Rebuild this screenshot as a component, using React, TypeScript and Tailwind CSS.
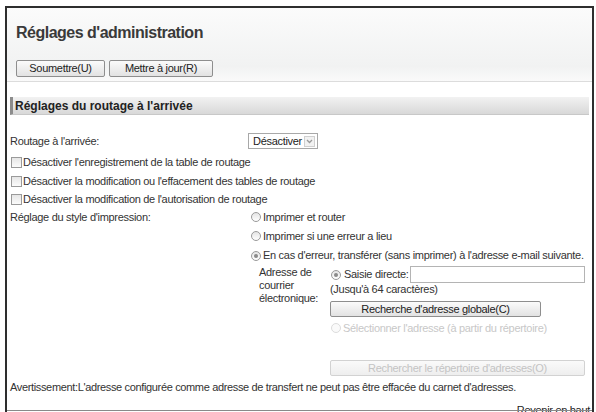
import React from "react";

const font = { fontFamily: '"Liberation Sans", Arial, sans-serif' };

function Radio({ checked = false, disabled = false }: { checked?: boolean; disabled?: boolean }) {
  return (
    <span
      className={
        "inline-flex items-center justify-center w-[10px] h-[10px] rounded-full border shrink-0 " +
        (disabled
          ? "border-[#dcdcdc] bg-[#fafafa]"
          : "border-[#9a9a9a] bg-gradient-to-b from-[#e4e4e4] to-[#ffffff]")
      }
    >
      {checked && <span className="w-[4px] h-[4px] rounded-full bg-[#8a8a8a]" />}
    </span>
  );
}

function Checkbox() {
  return (
    <span className="inline-block w-[11px] h-[11px] border border-[#9a9a9a] bg-gradient-to-b from-[#e6e6e6] to-[#fbfbfb] shrink-0" />
  );
}

function Btn({ children, className = "", disabled = false }: { children: React.ReactNode; className?: string; disabled?: boolean }) {
  return (
    <div
      className={
        "flex items-center justify-center rounded-[2px] border text-[11px] leading-none tracking-[-0.3px] " +
        (disabled
          ? "border-[#d2d2d2] bg-gradient-to-b from-[#fafafa] to-[#eeeeee] text-[#c4c4c4] "
          : "border-[#8e8e8e] bg-gradient-to-b from-[#fbfbfb] to-[#e2e2e2] text-[#222] ") +
        className
      }
    >
      {children}
    </div>
  );
}

export default function App() {
  return (
    <div className="w-[596px] h-[412px] bg-white overflow-hidden text-[#333]" style={font}>
      <div className="ml-[5px] mt-[6px] w-[589px] h-[406px] border-2 border-b-0 border-[#2e2e2e] relative">
        {/* page header */}
        <div className="h-[74px] border-b border-[#dcdcdc] bg-gradient-to-b from-[#fbfbfb] via-[#f1f2f2] via-80% to-[#fafafa] px-[7px]">
          <div className="pt-[15px] h-[44px] text-[16px] font-bold tracking-[-0.5px] text-[#3a3a3a] leading-[20px] pl-[2px]">
            Réglages d'administration
          </div>
          <div className="flex gap-[4px] pl-[2px] pt-[8px]">
            <Btn className="w-[89px] h-[17px]">Soumettre(U)</Btn>
            <Btn className="w-[104px] h-[17px]">Mettre à jour(R)</Btn>
          </div>
        </div>

        {/* section title */}
        <div className="mt-[15px] ml-[3px] mr-[3px] h-[18px] flex items-center border-l-[3px] border-[#8c8c8c] border-b border-b-[#c8c8c8] bg-gradient-to-b from-[#f2f2f2] to-[#d8d8d8] pl-[2px]">
          <span className="text-[12px] font-bold text-[#222]">Réglages du routage à l'arrivée</span>
        </div>

        <div className="pl-[3px] text-[11px] leading-[13px] tracking-[-0.3px] text-[#333]">
          {/* inbound routing */}
          <div className="mt-[17px] h-[18px] flex items-center">
            <div className="w-[238px]">Routage à l'arrivée:</div>
            <div className="w-[70px] h-[16px] border border-[#a8a8a8] bg-white flex items-center justify-between pl-[4px] pr-[2px]">
              <span className="text-[#222]">Désactiver</span>
              <span className="w-[11px] h-[11px] border border-[#d0d0d0] bg-[#f2f2f2] flex items-center justify-center">
                <svg width="7" height="5" viewBox="0 0 7 5">
                  <path d="M1 1 L3.5 3.5 L6 1" fill="none" stroke="#9a9a9a" strokeWidth="1.3" />
                </svg>
              </span>
            </div>
          </div>

          {[
            "Désactiver l'enregistrement de la table de routage",
            "Désactiver la modification ou l'effacement des tables de routage",
            "Désactiver la modification de l'autorisation de routage",
          ].map((t, i) => (
            <div key={i} className={"flex items-center gap-[1px] pl-[1px] " + (i === 2 ? "h-[17px]" : "h-[19px]") + (i === 0 ? " mt-[3px]" : "")}>
              <Checkbox />
              <span>{t}</span>
            </div>
          ))}

          {/* print style */}
          <div className="flex">
            <div className="w-[241px] h-[18px] flex items-center">Réglage du style d'impression:</div>
            <div className="flex-1">
              <div className="h-[18px] flex items-center gap-[2px]">
                <Radio />
                <span>Imprimer et router</span>
              </div>
              <div className="h-[20px] flex items-center gap-[2px]">
                <Radio />
                <span>Imprimer si une erreur a lieu</span>
              </div>
              <div className="h-[19px] flex items-center gap-[2px] whitespace-nowrap">
                <Radio checked />
                <span>En cas d'erreur, transférer (sans imprimer) à l'adresse e-mail suivante.</span>
              </div>

              <div className="flex pt-[1px]">
                <div className="w-[79px] pl-[8px] leading-[13px]">
                  Adresse de
                  <br />
                  courrier
                  <br />
                  électronique:
                </div>
                <div className="w-[255px]">
                  <div className="h-[17px] flex items-center">
                    <span className="pl-[1px] flex items-center gap-[3px]">
                      <Radio checked />
                      <span>Saisie directe:</span>
                    </span>
                    <span className="ml-[1px] flex-1 h-[17px] border border-[#b4b4b4] bg-white" />
                  </div>
                  <div className="h-[13px] leading-[13px]">(Jusqu'à 64 caractères)</div>
                  <Btn className="mt-[5px] w-[211px] h-[16px]">Recherche d'adresse globale(C)</Btn>
                  <div className="mt-[2px] h-[18px] flex items-center gap-[2px] pl-[1px] text-[#c8c8c8]">
                    <Radio disabled />
                    <span>Sélectionner l'adresse (à partir du répertoire)</span>
                  </div>
                  <Btn disabled className="mt-[23px] w-[255px] h-[16px]">Rechercher le répertoire d'adresses(O)</Btn>
                </div>
              </div>
            </div>
          </div>

          <div className="mt-[4px] h-[14px] flex items-center tracking-[-0.35px]">
            Avertissement:L'adresse configurée comme adresse de transfert ne peut pas être effacée du carnet d'adresses.
          </div>
          <div className="mt-[10px] h-[13px] text-right pr-[2px] text-[#222]">Revenir en haut</div>
        </div>

        <div className="absolute left-0 right-0 top-[402px] h-px bg-[#8a8a8a]" />
      </div>
    </div>
  );
}
